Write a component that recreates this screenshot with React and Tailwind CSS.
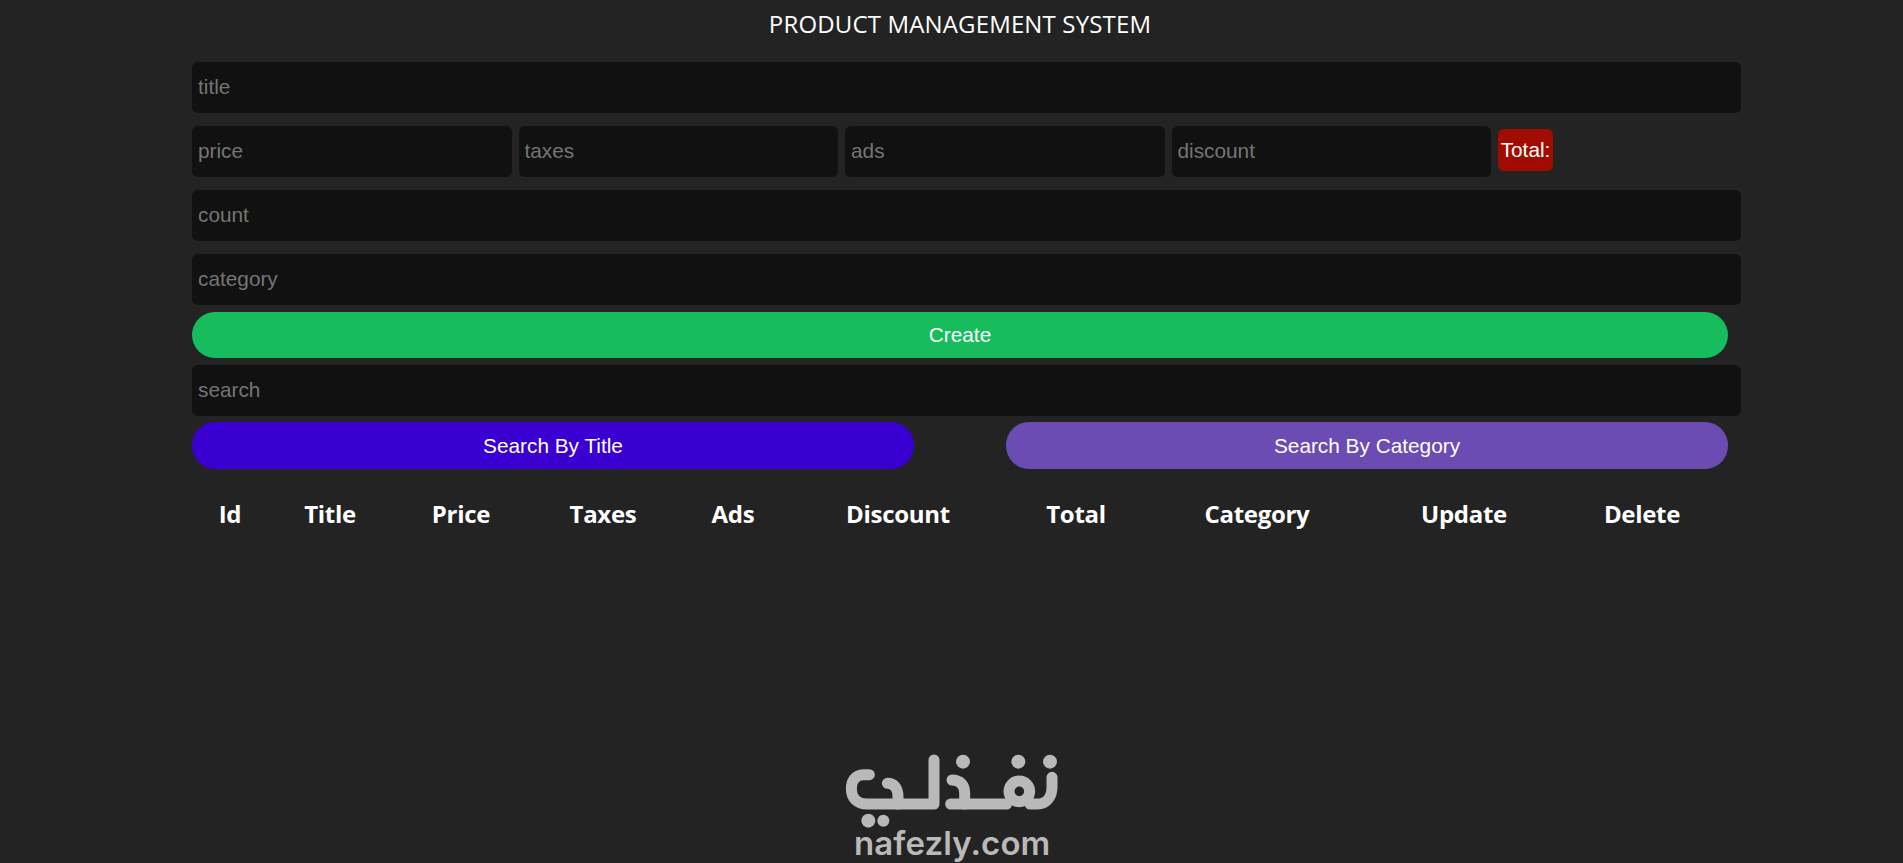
const heads = [
  ["Id", "w-[76px]"],
  ["Title", "w-[124px]"],
  ["Price", "w-[138px]"],
  ["Taxes", "w-[146px]"],
  ["Ads", "w-[114px]"],
  ["Discount", "w-[216px]"],
  ["Total", "w-[140px]"],
  ["Category", "w-[222px]"],
  ["Update", "w-[192px]"],
  ["Delete", "w-[164px]"],
];

const inputCls =
  "h-[51px] rounded-md bg-[#111111] px-1.5 pb-[2px] text-[20.8px] text-white outline-none placeholder:text-[#757575]";

function Logo() {
  return (
    <svg viewBox="0 0 900 300" className="block h-[100px] w-[300px]" role="img" aria-label="nafezly logo">
      <g fill="none" stroke="#b9b9b9" strokeWidth="33" strokeLinecap="round" strokeLinejoin="round">
        <path d="M208 134 H190 C165 134 154 155 154 176 C154 204 172 222 200 222 H402 V90" />
        <path d="M262 160 C284 160 294 176 294 200 V222" />
        <path d="M456 150 C482 150 494 166 494 190 V222 H452" />
        <path d="M494 222 H620" />
        <circle cx="658" cy="184" r="31" />
        <path d="M690 222 H712 C740 222 756 200 756 170 V142" />
      </g>
      <g fill="#b9b9b9">
        <circle cx="489" cy="95" r="21" />
        <circle cx="655" cy="95" r="21" />
        <circle cx="750" cy="95" r="21" />
        <circle cx="205" cy="272" r="21" />
        <circle cx="250" cy="272" r="18" />
      </g>
    </svg>
  );
}

export default function App() {
  return (
    <div className="relative h-[863px] w-full overflow-hidden bg-[#232323] font-['Liberation_Sans',Arial,sans-serif]">
      <h1 className="ml-[192px] h-[62px] w-[1536px] pt-[6px] text-center font-['Open_Sans',sans-serif] text-[24px] leading-[36px] font-normal tracking-[0.15px] text-white">
        PRODUCT MANAGEMENT SYSTEM
      </h1>
      <div className="ml-[192px] flex w-[1549px] flex-col">
        <input placeholder="title" className={`w-full ${inputCls}`} />
        <div className="mt-[13px] flex items-start gap-[7px]">
          <input placeholder="price" className={`w-[319.5px] ${inputCls}`} />
          <input placeholder="taxes" className={`w-[319.5px] ${inputCls}`} />
          <input placeholder="ads" className={`w-[319.5px] ${inputCls}`} />
          <input placeholder="discount" className={`w-[319.5px] ${inputCls}`} />
          <div className="mt-[3px] flex h-[42px] w-[55px] items-center justify-center rounded-md bg-[#a00d00] text-[20.8px] text-white">
            Total:
          </div>
        </div>
        <input placeholder="count" className={`mt-[13px] w-full ${inputCls}`} />
        <input placeholder="category" className={`mt-[13px] w-full ${inputCls}`} />
        <button className="mt-[7px] h-[46px] w-[1536px] rounded-[23px] bg-[#17bd5d] text-[20.8px] text-white">
          Create
        </button>
        <input placeholder="search" className={`mt-[7px] w-full ${inputCls}`} />
        <div className="mt-[6px] flex w-[1536px] justify-between">
          <button className="h-[47px] w-[722px] rounded-[23px] bg-[#3a00d1] text-[20.8px] text-white">
            Search By Title
          </button>
          <button className="h-[47px] w-[722px] rounded-[23px] bg-[#6b4cb3] text-[20.8px] text-white">
            Search By Category
          </button>
        </div>
        <div className="mt-[27px] flex font-['Open_Sans',sans-serif] text-[24px] leading-[36px] font-bold tracking-[-0.3px] text-white">
          {heads.map(([t, w]) => (
            <div key={t} className={`${w} shrink-0 text-center`}>
              {t}
            </div>
          ))}
        </div>
      </div>
      <div className="absolute top-[730px] left-[800px] w-[300px]">
        <Logo />
        <div className="absolute top-[93px] left-[54px] font-['Inter',sans-serif] text-[33px] leading-[40px] font-semibold tracking-[0.1px] whitespace-nowrap text-[#b9b9b9]">
          nafezly.com
        </div>
      </div>
    </div>
  );
}
